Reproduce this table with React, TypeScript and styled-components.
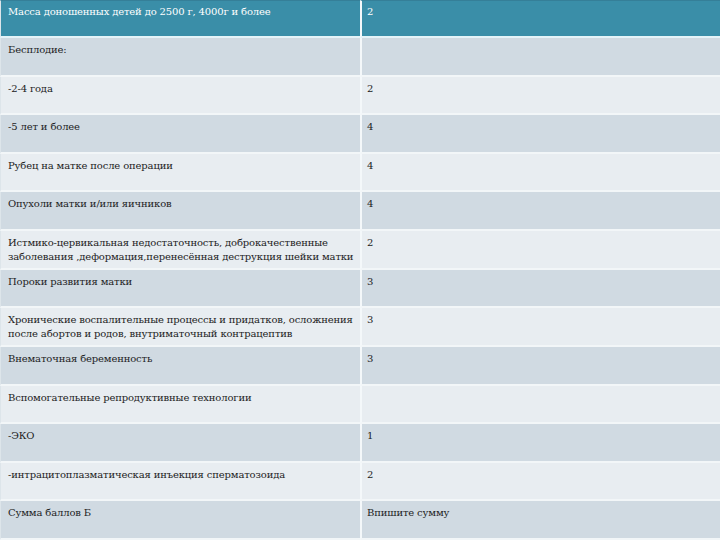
import * as React from 'react';
import styled, { createGlobalStyle } from 'styled-components';

const GlobalStyle = createGlobalStyle`
  html, body {
    margin: 0;
    padding: 0;
    background: #e8edf1;
  }
`;

const Table = styled.div`
  width: 720px;
  height: 540px;
  display: grid;
  grid-template-columns: 360px 1fr;
  grid-template-rows: 38px repeat(13, 1fr);
  overflow: hidden;
`;

type Tone = 'head' | 'dark' | 'light';

const bg: Record<Tone, string> = {
  head: '#3a8ea8',
  dark: '#d0dae2',
  light: '#e8edf1',
};

const Cell = styled.div<{ $tone: Tone; $right?: boolean }>`
  font-family: "DejaVu Serif", "Liberation Serif", serif;
  background: ${(p) => bg[p.$tone]};
  color: ${(p) => (p.$tone === 'head' ? '#ffffff' : '#222222')};
  font-size: 10px;
  letter-spacing: -0.15px;
  line-height: 14px;
  padding: 5px ${(p) => (p.$right ? '8px' : '6px')} 0 ${(p) => (p.$right ? '5px' : '7px')};
  border-bottom: 2px solid ${(p) => (p.$tone === 'head' ? '#e4f3f8' : '#f2f6f8')};
  border-left: ${(p) => (p.$right ? '2px solid #f4f8fa' : '1px solid #dde5ea')};
  box-sizing: border-box;
  ${(p) => (p.$tone === 'head' ? 'border-top: 1px solid #357f98; padding-top: 4px;' : '')}
`;

const rows: [string, string][] = [
  ['Масса доношенных детей до 2500 г, 4000г и более', '2'],
  ['Бесплодие:', ''],
  ['-2-4 года', '2'],
  ['-5 лет и более', '4'],
  ['Рубец на матке после операции', '4'],
  ['Опухоли матки и/или яичников', '4'],
  ['Истмико-цервикальная недостаточность, доброкачественные заболевания ,деформация,перенесённая деструкция шейки матки', '2'],
  ['Пороки развития матки', '3'],
  ['Хронические воспалительные процессы и придатков, осложнения после абортов и родов, внутриматочный контрацептив', '3'],
  ['Внематочная беременность', '3'],
  ['Вспомогательные репродуктивные технологии', ''],
  ['-ЭКО', '1'],
  ['-интрацитоплазматическая инъекция сперматозоида', '2'],
  ['Сумма баллов Б', 'Впишите сумму'],
];

export default function App(): JSX.Element {
  return (
    <>
      <GlobalStyle />
      <Table>
        {rows.map(([label, value], i) => {
          const tone: Tone = i === 0 ? 'head' : i % 2 === 1 ? 'dark' : 'light';
          return (
            <React.Fragment key={i}>
              <Cell $tone={tone}>{label}</Cell>
              <Cell $tone={tone} $right>{value}</Cell>
            </React.Fragment>
          );
        })}
      </Table>
    </>
  );
}
